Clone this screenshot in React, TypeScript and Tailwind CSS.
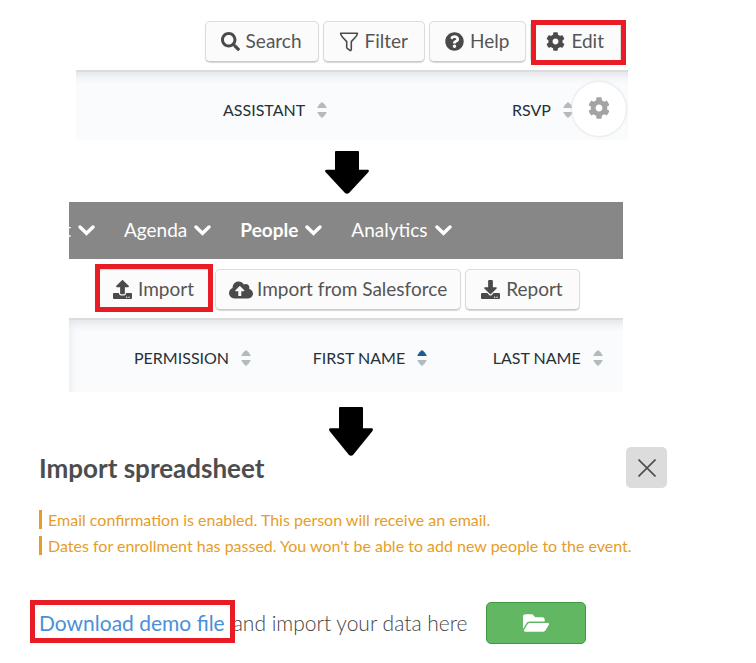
import type { ReactNode } from "react";
import {
  FaCloudUploadAlt,
  FaCog,
  FaDownload,
  FaFolderOpen,
  FaQuestionCircle,
  FaSearch,
  FaUpload,
} from "react-icons/fa";
import { clsx } from "clsx";

function Highlight({ className }: { className: string }) {
  return (
    <span
      aria-hidden="true"
      className={clsx("pointer-events-none absolute border-[5px] border-[#e81c24]", className)}
    />
  );
}

function ToolButton({ icon, children, className }: { icon: ReactNode; children: ReactNode; className?: string }) {
  return (
    <button
      type="button"
      className={clsx(
        "flex h-[41px] items-center whitespace-nowrap rounded-[5px] border border-[#dcdcdc] border-b-[#c8c8c8] bg-[#fbfbfb] text-[19px] text-[#555] shadow-[0_1px_1px_#d8d8d8]",
        className ?? "gap-[6px] pl-[15px] pr-4"
      )}
    >
      {icon}
      {children}
    </button>
  );
}

function FilterIcon() {
  return (
    <svg viewBox="0 0 20 20" className="size-5" fill="none" stroke="#4a4a4a" strokeWidth="1.6" strokeLinejoin="round">
      <path d="M1.6 1.3H18.4C18.4 3 17.6 4 16.6 5L12.3 9.6V17.2C12.3 18.6 11.4 18.7 10.6 18.1L8.3 16.4C7.8 16 7.7 15.7 7.7 15.2V9.6L3.4 5C2.4 4 1.6 3 1.6 1.3Z" />
    </svg>
  );
}

function SortIcon({ asc = false }: { asc?: boolean }) {
  return (
    <svg viewBox="0 0 10 16" className="h-4 w-[10px] shrink-0" fill="#b3bbbf">
      <path d="M0.3 5.4C1.5 3.4 3 1.8 4.3 0.6Q5 0 5.7 0.6C7 1.8 8.5 3.4 9.7 5.4Q9.8 6 9 6H1Q0.2 6 0.3 5.4Z" fill={asc ? "#1a5c93" : undefined} />
      <path d="M0.3 10.6C1.5 12.6 3 14.2 4.3 15.4Q5 16 5.7 15.4C7 14.2 8.5 12.6 9.7 10.6Q9.8 10 9 10H1Q0.2 10 0.3 10.6Z" />
    </svg>
  );
}

function HeaderCell({ children, asc, className }: { children: ReactNode; asc?: boolean; className?: string }) {
  return (
    <th scope="col" className={clsx("pr-0 text-left font-normal", className)}>
      <button type="button" className="flex items-center gap-3 whitespace-nowrap text-base text-[#263038]">
        {children}
        <SortIcon asc={asc} />
      </button>
    </th>
  );
}

function DownArrow({ className }: { className: string }) {
  return (
    <svg viewBox="0 0 44 46" preserveAspectRatio="none" className={clsx("block w-11", className)} aria-hidden="true">
      <path d="M11 0H33Q34 0 34 1V20H43Q44.500 20.500 43.500 22.500L24 45Q22 46.500 20 45L0.500 22.500Q-0.500 20.500 1 20H10V1Q10 0 11 0Z" />
    </svg>
  );
}

function Chevron() {
  return (
    <svg viewBox="0 0 17 17" className="size-[17px] shrink-0" fill="none" stroke="currentColor" strokeWidth="3.4" strokeLinecap="round">
      <path d="M2 5L8.500 11.300L15 5" />
    </svg>
  );
}

function NavItem({ label, active }: { label: string; active?: boolean }) {
  return (
    <a href="#" className={clsx("flex items-center gap-[7px]", active && "font-bold")}>
      {label}
      <Chevron />
    </a>
  );
}

function Alert({ children }: { children: ReactNode }) {
  return <p className="border-l-[3px] border-[#e69d28] pl-[6px] text-base leading-[19px] text-[#e69d28]">{children}</p>;
}

export default function App() {
  return (
    <main className="min-h-screen overflow-hidden bg-white pb-5 font-['Lato',sans-serif]">
      <section className="relative ml-[76px] mr-32">
        <div className="flex justify-end gap-1 pb-2 pr-[7px] pt-[21px]">
          <ToolButton icon={<FaSearch className="size-[19px] text-[#4a4a4a]" />}>Search</ToolButton>
          <ToolButton icon={<FilterIcon />}>Filter</ToolButton>
          <ToolButton icon={<FaQuestionCircle className="size-[19px] text-[#4a4a4a]" />}>Help</ToolButton>
          <div className="relative">
            <ToolButton icon={<FaCog className="size-[19px] text-[#4a4a4a]" />}>Edit</ToolButton>
            <Highlight className="-bottom-[3px] -right-[5px] -top-px left-px" />
          </div>
        </div>
        <table className="h-[70px] w-full table-fixed border-t-2 border-[#dcdcde] bg-[#f9fbfd] shadow-[inset_0_10px_8px_-6px_#e3e5e8]">
          <thead>
            <tr>
              <HeaderCell className="w-3/4 pl-[147px] pt-2">ASSISTANT</HeaderCell>
              <HeaderCell className="pl-[22px] pt-2">RSVP</HeaderCell>
            </tr>
          </thead>
        </table>
        <button
          type="button"
          aria-label="Table settings"
          className="absolute bottom-1 right-0.5 flex size-[54px] items-center justify-center rounded-full bg-white pb-0.5 text-[#a3a3a3] shadow-[0_0_3px_#d4d4d4]"
        >
          <FaCog className="size-[22px]" />
        </button>
      </section>

      <DownArrow className="ml-[325px] mt-[11px] h-[43px]" />

      <section className="ml-[69px] mr-[133px] mt-2">
        <nav className="flex h-[57px] items-center gap-[29px] overflow-hidden bg-[#878787] text-[19px] text-white">
          <a href="#" aria-label="Event" className="flex items-center gap-[7px]">
            <span className="flex w-0.5 justify-end overflow-hidden">t</span>
            <Chevron />
          </a>
          <NavItem label="Agenda" />
          <NavItem label="People" active />
          <NavItem label="Analytics" />
        </nav>
        <div className="flex gap-1 pb-2 pl-7 pt-[10px]">
          <div className="relative">
            <ToolButton icon={<FaUpload className="size-[19px] text-[#4a4a4a]" />}>Import</ToolButton>
            <Highlight className="-bottom-0.5 -left-0.5 -right-0.5 -top-[5px]" />
          </div>
          <ToolButton
            className="gap-1 px-[13px]"
            icon={<FaCloudUploadAlt className="size-6 text-[#4a4a4a]" />}
          >
            Import from Salesforce
          </ToolButton>
          <ToolButton icon={<FaDownload className="size-[19px] text-[#4a4a4a]" />}>Report</ToolButton>
        </div>
        <table className="h-[74px] w-full table-fixed border-t-2 border-[#dcdcde] bg-[#f9fbfd] shadow-[inset_6px_10px_8px_-6px_#e3e5e8]">
          <thead>
            <tr>
              <HeaderCell className="w-[44%] pl-[65px] pt-1">PERMISSION</HeaderCell>
              <HeaderCell asc className="w-[180px] pt-1">FIRST NAME</HeaderCell>
              <HeaderCell className="pt-1">LAST NAME</HeaderCell>
            </tr>
          </thead>
        </table>
      </section>

      <DownArrow className="ml-[329px] mt-[15px] h-[49px]" />

      <section className="-mt-[9px] ml-[39px] mr-[89px]">
        <header className="flex items-center justify-between">
          <h1 className="text-[26px] leading-8 font-bold text-[#4d4d4d]">Import spreadsheet</h1>
          <button
            type="button"
            aria-label="Close"
            className="flex size-[41px] items-center justify-center rounded-[5px] bg-[#dcdcdc]"
          >
            <svg viewBox="0 0 18 18" className="size-[18px]" stroke="#4d4d4d" strokeWidth="1.6">
              <path d="M0.500 0.500L17.500 17.500M17.500 0.500L0.500 17.500" />
            </svg>
          </button>
        </header>
        <div className="mt-[22px] flex flex-col gap-[7px]">
          <Alert>Email confirmation is enabled. This person will receive an email.</Alert>
          <Alert>Dates for enrollment has passed. You won't be able to add new people to the event.</Alert>
        </div>
        <div className="mt-[47px] flex items-center text-[21px] leading-8 font-light text-[#444]">
          <span className="relative whitespace-nowrap font-normal text-[#4a90d9]">
            <a href="#">Download demo file</a>
            <Highlight className="-bottom-1 -left-[9px] -right-[10px] -top-[7px]" />
          </span>
          <span className="ml-2 whitespace-nowrap">and import your data here</span>
          <button
            type="button"
            aria-label="Choose file"
            className="ml-[18px] flex h-[42px] w-[100px] items-center justify-center rounded-[5px] border border-[#3f9a43] bg-[#62b763] text-white"
          >
            <FaFolderOpen className="size-[26px]" />
          </button>
        </div>
      </section>
    </main>
  );
}
